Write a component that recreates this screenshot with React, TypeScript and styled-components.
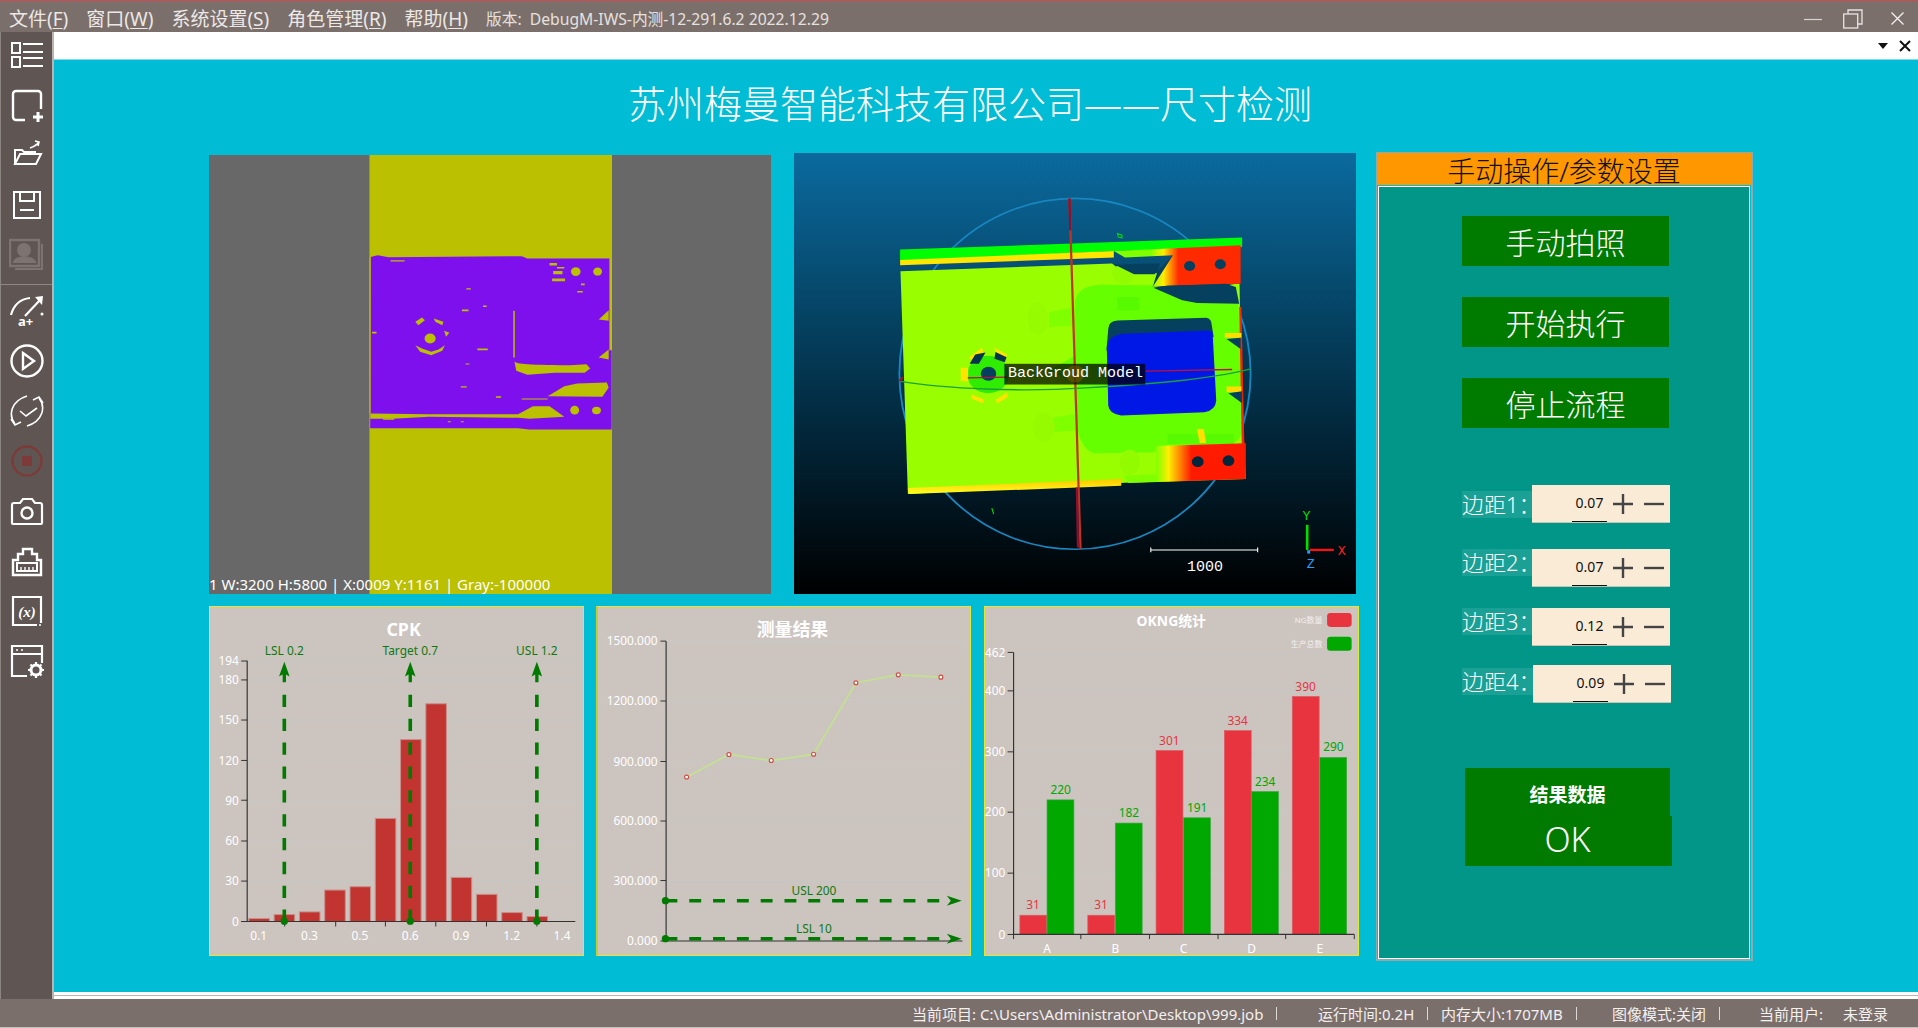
import React from "react";
import styled, { createGlobalStyle } from "styled-components";

const FONT = `"Noto Sans", "Noto Sans CJK SC", sans-serif`;

const Global = createGlobalStyle`
  html, body { margin: 0; padding: 0; overflow: hidden; background: #fff; }
  * { box-sizing: border-box; }
`;

const Page = styled.div`
  width: 1918px; height: 1028px; display: flex; flex-direction: column;
  font-family: ${FONT}; background: #fff; overflow: hidden;
`;

/* ---------- title bar ---------- */
const TitleBar = styled.header`
  height: 32px; flex: none; display: flex; align-items: center; padding: 3px 0 0 9px;
  background: #7b6f6c; border-top: 2px solid #a35f60; color: #ece8e6;
`;
const Menu = styled.nav`display: flex; gap: 18px; align-items: center;`;
const MenuItem = styled.span`font-size: 19px; line-height: 24px; white-space: nowrap; u { text-underline-offset: 2px; }`;
const Version = styled.span`font-size: 15.7px; margin-left: 18px; white-space: nowrap; color: #e6e1df;`;
const WindowButtons = styled.div`
  margin-left: auto; display: flex; align-items: center; gap: 21px; padding-right: 14px;
  svg:last-child { margin-left: 7px; }
`;

const Body = styled.div`flex: 1; min-height: 0; display: flex;`;

/* ---------- sidebar ---------- */
const Sidebar = styled.aside`
  width: 54px; flex: none; background: #5f5552; border-right: 2px solid #b9b4b2;
  border-left: 1px solid #8c8582; display: flex; flex-direction: column; align-items: center;
  padding-top: 5px; gap: 14px;
`;
const ToolIcon = styled.svg.attrs({ viewBox: "0 0 36 36", fill: "none" })<{ $tint?: string }>`
  width: 36px; height: 36px; flex: none; stroke: ${p => p.$tint ?? "#fff"}; stroke-width: 2;
`;
const ToolDivider = styled.div`
  align-self: stretch; height: 1px; background: #8f8784; margin: -3px 0 -6px;
`;

/* ---------- workspace ---------- */
const Workspace = styled.main`flex: 1; min-width: 0; display: flex; flex-direction: column;`;
const TabStrip = styled.div`
  height: 27px; flex: none; display: flex; justify-content: flex-end; align-items: center;
  gap: 11px; padding: 0 7px 0 0; background: #fff;
`;
const Canvas = styled.div`
  flex: 1; min-height: 0; background: #00bcd4; border-top: 1px solid #7fdcea;
  padding-left: 155px; display: flex; flex-direction: column;
`;
const PageFoot = styled.div`
  height: 7px; flex: none; background: #fff; display: flex; align-items: center;
  &::after { content: ""; flex: 1; height: 1px; background: #b5b5b5; }
`;
const Heading = styled.h1`
  margin: 0 0 0 -155px; height: 92px; flex: none; display: flex; justify-content: center; align-items: center;
  padding: 0 32px 6px 0; font-size: 38px; font-weight: 300; color: #fff; line-height: 1; white-space: nowrap;
`;
const Columns = styled.div`display: flex; align-items: flex-start; gap: 17px;`;
const LeftArea = styled.div`width: 1150px; flex: none; padding-top: 1px; display: flex; flex-direction: column; gap: 12px;`;
const ViewRow = styled.div`display: flex; gap: 23px; height: 441px; align-items: flex-start;`;
const ChartRow = styled.div`display: flex; gap: 12px;`;

const ImagePane = styled.div<{ $top?: number }>`
  position: relative; width: 562px; height: ${p => 441 - (p.$top ?? 0)}px; margin-top: ${p => p.$top ?? 0}px;
  flex: none; overflow: hidden; svg { display: block; width: 100%; height: 100%; }
`;
const ImageInfo = styled.span`
  position: absolute; left: 0; bottom: -1px; font-size: 15px; line-height: 22px; color: #fff; white-space: nowrap;
`;
const ModelTag = styled.span`
  position: absolute; left: 214px; top: 211px; font-family: "Liberation Mono", monospace; font-size: 15px;
  line-height: 20px; color: #fff; white-space: pre;
`;
const ScaleTag = styled.span`
  position: absolute; left: 393px; top: 405px; font-family: "Liberation Mono", monospace; font-size: 15px;
  line-height: 20px; color: #fff;
`;

const ChartPanel = styled.section<{ $thick?: boolean; $shift?: number }>`
  width: 375px; height: 350px; flex: none; background: #ccc4bf; border: 1px solid #e6e632;
  ${p => p.$thick ? "border-left: 2px solid #c4cc30;" : ""}
  margin-left: ${p => p.$shift ?? 0}px; overflow: hidden;
  svg { display: block; width: 100%; height: 100%; }
`;
const AxisText = styled.text`fill: #fff; font-size: 36px; font-family: ${FONT};`;
const ChartTitle = styled.text<{ $size?: number }>`
  fill: #fff; font-size: ${p => p.$size ?? 54}px; font-weight: 700; text-anchor: middle; font-family: ${FONT};
`;
const MarkText = styled.text`fill: #0c7a10; font-size: 36px; text-anchor: middle; font-family: ${FONT};`;
const ValueText = styled.text<{ $c: string }>`fill: ${p => p.$c}; font-size: 36px; text-anchor: middle; font-family: ${FONT};`;
const LegendText = styled.text`fill: #f4f1ef; font-size: 24px; text-anchor: end; font-family: ${FONT};`;
const Scene3dLetter = styled.text<{ $c: string }>`fill: ${p => p.$c}; font-size: 36px; font-family: "Liberation Mono", monospace;`;

/* ---------- right panel ---------- */
const ControlPanel = styled.section`
  width: 377px; height: 809px; flex: none; display: flex; flex-direction: column;
  background: #00bcd4; border: 1px solid #8fa9ad; border-width: 1px 2px 2px 1px;
`;
const PanelHead = styled.div`
  height: 32px; flex: none; background: #ff9800; color: #111; font-size: 28px; font-weight: 300; line-height: 36px;
  text-align: center; white-space: nowrap;
`;
const PanelBody = styled.div`
  flex: 1; margin: 1px 1px 0 1px; background: #019688; border: 1px solid #fff;
  padding: 29px 0 0 83px; display: flex; flex-direction: column; align-items: flex-start;
`;
const ActionButton = styled.div`
  width: 207px; height: 50px; flex: none; background: #007b00; color: #fff; font-size: 30px; font-weight: 300;
  display: flex; align-items: center; justify-content: center; margin-bottom: 31px; white-space: nowrap;
  &:nth-of-type(3) { margin-bottom: 0; }
`;
const ParamRow = styled.div<{ $top: number }>`
  display: flex; align-items: flex-start; margin-top: ${p => p.$top}px; flex: none;
`;
const ParamLabel = styled.span<{ $shift?: number; $drop: number }>`
  width: ${p => 70 + (p.$shift ?? 0)}px; height: 27px; flex: none; margin-top: ${p => p.$drop}px; background: rgba(255,255,255,.1);
  color: #fff; font-size: 22px; font-weight: 300; line-height: 27px; white-space: nowrap;
`;
const ParamBox = styled.div`
  width: 138px; height: 38px; flex: none; background: #faebd7; display: flex; align-items: center;
  padding-left: 40px; border-bottom: 1px solid #c8c2b4;
`;
const ParamValue = styled.span`
  width: 35px; height: 37px; flex: none; border-bottom: 1px solid #111; font-size: 14px; color: #111;
  display: flex; align-items: center; justify-content: center; padding-bottom: 1px;
`;
const StepIcon = styled.svg.attrs({ viewBox: "0 0 20 20" })`
  width: 20px; height: 20px; flex: none; margin-left: 6px; stroke: #444; stroke-width: 2.4; fill: none;
  & + & { margin-left: 11px; }
`;
const ResultWrap = styled.div`margin: 65px 0 0 3px; display: flex; flex-direction: column; align-items: flex-start;`;
const ResultHead = styled.div`
  width: 205px; height: 48px; background: #007b00; color: #fff; font-size: 19px; font-weight: 700;
  display: flex; align-items: center; justify-content: center; padding-top: 4px;
`;
const ResultValue = styled.div`
  width: 207px; height: 50px; background: #007b00; color: #fff; font-size: 34px; font-weight: 300;
  display: flex; align-items: center; justify-content: center; padding: 0 2px 5px 0;
`;

/* ---------- status bar ---------- */
const StatusBar = styled.footer`
  height: 29px; flex: none; background: #7b6f6c; border-bottom: 1px solid #c4c0be; color: #f4f1ef;
  display: flex; align-items: center; padding-left: 912px; font-size: 15px;
`;
const StatusCell = styled.span<{ $w: number }>`
  width: ${p => p.$w}px; flex: none; white-space: nowrap; display: flex; align-items: center;
`;
const StatusBarSep = styled.i`
  width: 1px; height: 13px; background: #dcd8d6; margin-left: 13px; flex: none;
`;

/* ---------- drawings ---------- */
const Tool = {
  List: () => (
    <ToolIcon>
      <rect x="3" y="6" width="8" height="10" /><rect x="3" y="20" width="8" height="10" />
      <path d="M14 7h20M14 15h20M14 21h20M14 29h20" />
    </ToolIcon>
  ),
  New: () => (
    <ToolIcon>
      <path d="M16 33H7a3 3 0 0 1-3-3V7a3 3 0 0 1 3-3h22a3 3 0 0 1 3 3v15" strokeWidth="2.4" />
      <path d="M29 25v10M24 30h10" strokeWidth="3" />
    </ToolIcon>
  ),
  Open: () => (
    <ToolIcon>
      <path d="M6 27 V13h7l2 2h11v3" /><path d="M6 27h21l5-10H11z" />
      <path d="M21 11c3-1 6-2 9-6M26 4l4 1-1 4" strokeWidth="1.6" />
    </ToolIcon>
  ),
  Save: () => (
    <ToolIcon>
      <rect x="5" y="5" width="26" height="26" /><path d="M11 5v9h14V5M11 23h14" />
    </ToolIcon>
  ),
  Person: () => (
    <ToolIcon $tint="#7d7370">
      <rect x="1" y="3" width="29" height="26" strokeWidth="2.4" />
      <path d="M33 7v25H6" />
      <circle cx="15" cy="13" r="6" fill="#7d7370" />
      <path d="M5 25c2-6 18-6 21 0z" fill="#7d7370" />
    </ToolIcon>
  ),
  Arc: () => (
    <ToolIcon>
      <path d="M2 22C5 11 12 6 21 5" strokeWidth="2.2" />
      <path d="M16 23 31 7" strokeWidth="2.2" /><path d="M26 4l8-1-1 9z" fill="#fff" stroke="none" />
      <circle cx="33" cy="21" r="1.5" fill="#fff" stroke="none" />
      <text x="9" y="33" fontSize="13" fontWeight="700" fill="#fff" stroke="none" fontFamily={FONT}>a+</text>
    </ToolIcon>
  ),
  Play: () => (
    <ToolIcon>
      <circle cx="18" cy="18" r="15.5" strokeWidth="2.4" /><path d="M14 10l11 8-11 8z" strokeWidth="2.4" />
    </ToolIcon>
  ),
  Cycle: () => (
    <ToolIcon>
      <path d="M6 31C-1 22 2 8 18 3" strokeWidth="1.6" /><path d="M2 26l4 6 6-3" strokeWidth="1.6" />
      <path d="M30 5c7 9 4 23-12 28" strokeWidth="1.6" /><path d="M34 10l-4-6-6 3" strokeWidth="1.6" />
      <path d="M11 18l6 5 11-8" strokeWidth="1.6" />
    </ToolIcon>
  ),
  Stop: () => (
    <ToolIcon $tint="#7c3b38">
      <circle cx="18" cy="18" r="14.5" strokeWidth="2.4" /><rect x="13" y="13" width="10" height="10" fill="#7c3b38" stroke="none" />
    </ToolIcon>
  ),
  Camera: () => (
    <ToolIcon>
      <path d="M3 12a2 2 0 0 1 2-2h6l3-4h9l3 4h5a2 2 0 0 1 2 2v18a1 1 0 0 1-1 1H4a1 1 0 0 1-1-1z" strokeWidth="2.2" />
      <circle cx="18" cy="20" r="5.5" strokeWidth="2.4" />
    </ToolIcon>
  ),
  Socket: () => (
    <ToolIcon>
      <path d="M4 32V17h5V11h5V6h9v5h5v6h4v15z" strokeWidth="2.4" />
      <rect x="8" y="20" width="20" height="8" /><path d="M12 24v4M16 24v4M20 24v4M24 24v4" strokeWidth="1.4" />
    </ToolIcon>
  ),
  Formula: () => (
    <ToolIcon>
      <path d="M28 32H4V4h28v26" strokeWidth="2.2" />
      <text x="18" y="24" textAnchor="middle" fontSize="15" fontWeight="700" fontStyle="italic" fill="#fff" stroke="none" fontFamily="Liberation Serif, serif">(x)</text>
      <circle cx="31" cy="32" r="1" fill="#fff" stroke="none" />
    </ToolIcon>
  ),
  Gear: () => (
    <ToolIcon>
      <path d="M18 33H3V3h30v17M3 11h30" strokeWidth="2.2" />
      <circle cx="8" cy="7" r="1" fill="#fff" stroke="none" /><circle cx="13" cy="7" r="1" fill="#fff" stroke="none" />
      <circle cx="27" cy="27" r="5" strokeWidth="3" />
      <path d="M27 19v3M27 32v3M19 27h3M32 27h3M21.5 21.5l2 2M30.5 30.5l2 2M21.5 32.5l2-2M30.5 23.5l2-2" strokeWidth="2.2" />
    </ToolIcon>
  ),
};

const Flat2D = () => (
  <svg viewBox="24 14 1520 1318" preserveAspectRatio="none">
    <rect x="24" y="14" width="1520" height="1318" fill="#686868" />
    <rect x="458" y="14" width="656" height="1318" fill="#bbc000" />
    <path d="M461 320L480 315 510 321 870 318 885 325H1107V600L1113 600V838H890L860 834H460Z" fill="#7f10ee" />
    <g fill="#bbc000">
      <path d="M460 790L620 792 860 792 900 768H945L985 800 890 806 860 803 620 800 520 806 460 806Z" />
      <path d="M850 634C856 640 870 645 1000 645L1045 642 1055 655 1040 668 960 668 885 674 855 662Z" />
      <path d="M940 738L985 708 1020 700 1100 697 1105 712 1088 740Z" />
      <path d="M1078 508L1105 480V512ZM1078 622L1105 598V628Z" />
      <rect x="847" y="482" width="4" height="140" />
      <rect x="458" y="320" width="3" height="470" />
      <ellipse cx="1016" cy="364" rx="13" ry="13" /><ellipse cx="1075" cy="364" rx="12" ry="12" />
      <ellipse cx="1013" cy="780" rx="12" ry="13" /><ellipse cx="1072" cy="781" rx="12" ry="11" />
      <circle cx="622" cy="565" r="15" />
      <path d="M582 515L600 502 608 510 590 525ZM632 505L658 515 655 525 636 515ZM660 542L674 548 665 560ZM582 585L600 595 625 605 645 598 662 585 655 602 625 615 595 605Z" />
      <path d="M515 330h38v4h-38zM708 478h18v5h-18zM750 595h28v5h-28zM720 414h12v4h-12zM765 466h10v4h-10zM718 640h10v3h-10zM465 545h12v5h-12zM705 708h16v4h-16zM800 738h14v5h-14zM870 745h70v3h-70z" />
      <path d="M945 338h20v8h-20zM965 350h20v5h-20zM955 362h25v10h-25zM952 385h35v8h-35zM1030 400h10v5h-10zM1020 422h15v5h-15z" />
      <path d="M495 805h30v4h-30zM670 813h8v3h-8zM705 813h8v3h-8z" />
    </g>
  </svg>
);

const BG = "#05405f";
const Cloud3D = () => (
  <svg viewBox="10 9 1520 1320" preserveAspectRatio="none">
    <defs>
      <linearGradient id="sky" x1="0" y1="0" x2="0" y2="1">
        <stop offset="0" stopColor="#0b6a9e" /><stop offset=".3" stopColor="#064a6e" />
        <stop offset=".62" stopColor="#02283c" /><stop offset="1" stopColor="#000" />
      </linearGradient>
      <linearGradient id="heatTop" gradientUnits="userSpaceOnUse" x1="975" y1="0" x2="1050" y2="0">
        <stop offset="0" stopColor="#80ff00" /><stop offset=".45" stopColor="#ffee00" /><stop offset="1" stopColor="#ff2a00" />
      </linearGradient>
      <linearGradient id="heatLow" gradientUnits="userSpaceOnUse" x1="990" y1="0" x2="1085" y2="0">
        <stop offset="0" stopColor="#80ff00" /><stop offset=".35" stopColor="#ffee00" /><stop offset="1" stopColor="#ff1a00" />
      </linearGradient>
      <linearGradient id="rim" gradientUnits="userSpaceOnUse" x1="0" y1="985" x2="0" y2="1030">
        <stop offset="0" stopColor="#ffc800" /><stop offset="1" stopColor="#ffff20" />
      </linearGradient>
    </defs>
    <rect x="10" y="9" width="1520" height="1320" fill="url(#sky)" />
    <ellipse cx="770" cy="670" rx="475" ry="525" fill="none" stroke="#1a86c0" strokeWidth="5" />
    <path d="M297 298L1222 262V290L875 302 297 334Z" fill="#00ff00" />
    <path d="M297 329L875 302V322L297 345Z" fill="#ffe600" />
    <path d="M298 363L870 340 900 365 985 368 1215 400 1218 600 1226 840 1232 985 905 996 318 1030Z" fill="#99ff00" />
    <path d="M770 450Q780 405 840 403L985 405 1060 450 1212 458 1224 830Q1222 872 1190 880L990 886 985 905 820 908Q778 890 772 800L770 700 700 660 770 615Z" fill="#66ff00" />
    <path d="M700 485L770 470V525L700 530ZM710 800L770 790V840L710 845Z" fill="#80ff00" />
    <path d="M884 440h60v40h-60zM1020 850h180v30h-180z" fill="#58fa00" />
    <ellipse cx="670" cy="505" rx="28" ry="48" fill="#96fb00" /><ellipse cx="685" cy="830" rx="30" ry="45" fill="#96fb00" />
    <ellipse cx="918" cy="935" rx="28" ry="38" fill="#92fb00" /><ellipse cx="900" cy="372" rx="30" ry="30" fill="#92fb00" />
    <path d="M875 342L930 372H985L1036 315 1218 300V398L1100 420 980 410 1000 340Z" fill={BG} />
    <path d="M875 302L1218 285V400L1020 406 980 410 1035 315 905 322Z" fill="url(#heatTop)" />
    <path d="M1178 400L1205 410 1214 460 1100 458 1060 450 982 412 1020 406Z" fill={BG} />
    <path d="M1214 470h6l8 410h-7z" fill="#ff2400" />
    <path d="M990 886L1232 878V985L915 997 900 975 990 970Z" fill="url(#heatLow)" />
    <path d="M318 1012L895 985V1005L320 1030Z" fill="url(#rim)" />
    <circle cx="1080" cy="347" r="15" fill={BG} /><circle cx="1163" cy="342" r="15" fill={BG} />
    <circle cx="1102" cy="933" r="16" fill="#04263a" /><circle cx="1185" cy="930" r="16" fill="#04263a" />
    <path d="M860 535Q860 512 885 510L1125 502Q1140 505 1140 525L1145 560 855 600Z" fill={BG} />
    <path d="M856 590Q860 555 900 550L1130 540 1142 545 1152 750Q1150 780 1120 785L895 795Q862 790 860 765Z" fill="#0018e6" />
    <path d="M1175 548h45v14h-45zM1180 708h40v16h-40z" fill="#ffdd00" />
    <path d="M1180 566L1218 562V596ZM1185 728L1222 722V758Z" fill={BG} />
    <path d="M1100 835h18l7 42h-18z" fill="#ffe000" />
    <circle cx="535" cy="672" r="56" fill="#30ec00" />
    <circle cx="536" cy="670" r="21" fill={BG} />
    <path d="M484 620L518 592 522 604 497 642ZM552 592L586 612 582 632 555 606Z" fill="#ffe400" />
    <path d="M485 640L500 612 528 606 510 640ZM555 605L585 620 580 635 552 625Z" fill="#04344e" />
    <path d="M461 652h20v40h-20zM490 732l32 14v12l-32-14zM555 748l32-22v14l-26 18z" fill="#ffe400" />
    <path d="M755 145L785 1195" stroke="#c03322" strokeWidth="6" fill="none" />
    <path d="M755 145L757 240M775 1010L778 1190" stroke="#8d1030" strokeWidth="6" fill="none" />
    <path d="M295 692C420 715 620 725 800 712 950 702 1120 690 1245 655" stroke="#1aa040" strokeWidth="4" fill="none" />
    <path d="M480 682L585 680M960 662L1195 657" stroke="#b81040" strokeWidth="4" fill="none" />
    <path d="M295 692L305 680" stroke="#a01030" strokeWidth="6" />
    <rect x="579" y="640" width="381" height="62" fill="#000" fillOpacity=".72" />
    <circle cx="770" cy="670" r="26" fill="#7a5a00" fillOpacity=".55" />
    <path d="M975 1190v14M975 1197H1264M1264 1190v14" stroke="#fff" strokeWidth="3" fill="none" />
    <path d="M1398 1122V1197" stroke="#00e000" strokeWidth="7" />
    <path d="M1405 1197H1470" stroke="#ff1010" strokeWidth="7" />
    <rect x="1398" y="1198" width="8" height="10" fill="#20a0ff" />
    <Scene3dLetter $c="#00e000" x="1385" y="1108">Y</Scene3dLetter>
    <Scene3dLetter $c="#ff2020" x="1481" y="1212">X</Scene3dLetter>
    <Scene3dLetter $c="#20a0ff" x="1397" y="1252">Z</Scene3dLetter>
    <path d="M885 250l12 5v8l-10-2zM545 1072l5 18" stroke="#00e000" strokeWidth="3" fill="none" />
  </svg>
);

const dashProps = { stroke: "#007b00", strokeWidth: 11, fill: "none" };

const CpkChart = () => {
  const gx = [181, 238, 359, 481, 601, 724, 845];
  const yl: [string, number][] = [["194", 181], ["180", 238], ["150", 359], ["120", 481], ["90", 601], ["60", 724], ["30", 845], ["0", 967]];
  const tops = [958, 946, 938, 872, 862, 656, 418, 310, 834, 885, 940, 952];
  const xl: [string, number][] = [["0.1", 175], ["0.3", 328], ["0.5", 480], ["0.6", 632], ["0.9", 785], ["1.2", 938], ["1.4", 1090]];
  const marks: [string, number][] = [["LSL 0.2", 252], ["Target 0.7", 632], ["USL 1.2", 1014]];
  return (
    <svg viewBox="28 18 1125 1050">
      {gx.map(y => <line key={y} x1="140" x2="1128" y1={y} y2={y} stroke="#c6c8c6" strokeWidth="3" />)}
      {tops.map((t, i) => {
        const x = 145 + i * 76.3;
        return <rect key={i} x={x} y={t} width="62" height={967 - t} fill="#c1342f" stroke="#c98f8a" strokeWidth="3" />;
      })}
      <path d="M140 180V967M122 967H1130" stroke="#333" strokeWidth="3.5" fill="none" />
      {yl.map(([, y]) => <line key={y} x1="122" x2="140" y1={y} y2={y} stroke="#333" strokeWidth="3" />)}
      {[253, 407, 557, 709, 862, 1014].map(x => <line key={x} x1={x} x2={x} y1="967" y2="982" stroke="#333" strokeWidth="3" />)}
      {yl.map(([t, y]) => <AxisText key={t} x="115" y={y + 13} textAnchor="end">{t}</AxisText>)}
      {xl.map(([t, x]) => <AxisText key={t} x={x} y="1023" textAnchor="middle">{t}</AxisText>)}
      {marks.map(([t, x]) => (
        <g key={t}>
          <MarkText x={x} y="162">{t}</MarkText>
          <path d={`M${x} 283V967`} {...dashProps} strokeDasharray="37 35" />
          <path d={`M${x} 183l16 45-11-6v23h-10v-23l-11 6z`} fill="#007b00" />
          <circle cx={x} cy="966" r="11" fill="#007b00" />
        </g>
      ))}
      <ChartTitle x="612" y="106">CPK</ChartTitle>
    </svg>
  );
};

const ResultChart = () => {
  const ticks: [string, number][] = [["1500.000", 120], ["1200.000", 301], ["900.000", 484], ["600.000", 664], ["300.000", 844], ["0.000", 1027]];
  const pts = [[286, 531], [414, 463], [542, 481], [670, 462], [798, 246], [926, 222], [1055, 229]];
  const limits: [string, number, number][] = [["USL 200", 905, 887], ["LSL 10", 1020, 1002]];
  return (
    <svg viewBox="18 18 1125 1050">
      {ticks.slice(0, 5).map(([t, y]) => <line key={t} x1="224" x2="1120" y1={y} y2={y} stroke="#c6c8c6" strokeWidth="3" />)}
      <path d="M224 120V1027H1120" stroke="#333" strokeWidth="3.5" fill="none" />
      {ticks.map(([t, y]) => <line key={t} x1="207" x2="224" y1={y} y2={y} stroke="#333" strokeWidth="3" />)}
      {ticks.map(([t, y]) => <AxisText key={t} x="198" y={y + 13} textAnchor="end">{t}</AxisText>)}
      <polyline points={pts.join(" ")} fill="none" stroke="#c4de96" strokeWidth="6" />
      {pts.map(([x, y]) => <circle key={x} cx={x} cy={y} r="6" fill="#fff" stroke="#d04a40" strokeWidth="3.5" />)}
      {limits.map(([t, y, ty]) => (
        <g key={t}>
          <MarkText x="671" y={ty}>{t}</MarkText>
          <path d={`M222 ${y}H1075`} {...dashProps} strokeDasharray="36 36" />
          <circle cx="222" cy={y} r="11" fill="#007b00" />
          <path d={`M1118 ${y}l-45-15 12 15-12 15z`} fill="#007b00" />
        </g>
      ))}
      <ChartTitle x="606" y="106">测量结果</ChartTitle>
    </svg>
  );
};

const OkngChart = () => {
  const grid: [string, number][] = [["462", 155], ["400", 271], ["300", 455], ["200", 637], ["100", 821], ["0", 1006]];
  const reds = [[117, 948, "31"], [322, 948, "31"], [528, 451, "301"], [734, 391, "334"], [939, 288, "390"]] as const;
  const greens = [[199, 600, "220"], [405, 670, "182"], [611, 654, "191"], [816, 575, "234"], [1022, 472, "290"]] as const;
  const cats: [string, number][] = [["A", 199], ["B", 405], ["C", 611], ["D", 816], ["E", 1022]];
  return (
    <svg viewBox="12 18 1125 1050">
      {grid.slice(0, 5).map(([t, y]) => <line key={t} x1="98" x2="1126" y1={y} y2={y} stroke="#c6c8c6" strokeWidth="3" />)}
      {reds.map(([x, t, v]) => (
        <g key={x}>
          <rect x={x} y={t} width="81" height={1006 - t} fill="#e8343f" stroke="#dc5a62" strokeWidth="2" />
          <ValueText $c="#e8343f" x={x + 40} y={t - 18}>{v}</ValueText>
        </g>
      ))}
      {greens.map(([x, t, v]) => (
        <g key={x}>
          <rect x={x} y={t} width="81" height={1006 - t} fill="#00a800" stroke="#3aa844" strokeWidth="2" />
          <ValueText $c="#00a800" x={x + 41} y={t - 18}>{v}</ValueText>
        </g>
      ))}
      <path d="M98 155V1006H1126" stroke="#333" strokeWidth="3.5" fill="none" />
      {grid.map(([t, y]) => <line key={t} x1="80" x2="98" y1={y} y2={y} stroke="#333" strokeWidth="3" />)}
      {[98, 301, 508, 715, 919, 1126].map(x => <line key={x} x1={x} x2={x} y1="1006" y2="1020" stroke="#333" strokeWidth="3" />)}
      {grid.map(([t, y]) => <AxisText key={t} x="73" y={y + 13} textAnchor="end">{t}</AxisText>)}
      {cats.map(([t, x]) => <AxisText key={t} x={x} y="1062" textAnchor="middle">{t}</AxisText>)}
      <ChartTitle $size={42} x="574" y="74">OKNG统计</ChartTitle>
      <LegendText x="1030" y="66">NG数量</LegendText>
      <LegendText x="1030" y="138">生产总数</LegendText>
      <rect x="1044" y="36" width="74" height="42" rx="10" fill="#e8343f" />
      <rect x="1044" y="108" width="74" height="42" rx="10" fill="#00a800" />
    </svg>
  );
};

const menus: [string, string][] = [["文件", "F"], ["窗口", "W"], ["系统设置", "S"], ["角色管理", "R"], ["帮助", "H"]];
const params: { n: number; v: string; top: number; drop: number; shift?: number }[] = [
  { n: 1, v: "0.07", top: 57, drop: 6 }, { n: 2, v: "0.07", top: 26, drop: 0 },
  { n: 3, v: "0.12", top: 21, drop: 0 }, { n: 4, v: "0.09", top: 19, drop: 3, shift: 1 },
];

export default function App() {
  return (
    <Page>
      <Global />
      <TitleBar>
        <Menu>
          {menus.map(([t, k]) => <MenuItem key={k}>{t}(<u>{k}</u>)</MenuItem>)}
        </Menu>
        <Version>版本:&nbsp; DebugM-IWS-内测-12-291.6.2 2022.12.29</Version>
        <WindowButtons>
          <svg width="18" height="20" viewBox="0 0 18 20"><path d="M0 10.5h18" stroke="#d8d3d1" strokeWidth="1.2" /></svg>
          <svg width="20" height="20" viewBox="0 0 20 20" fill="none" stroke="#e8e4e2" strokeWidth="1.3"><rect x=".7" y="5" width="14" height="14" /><path d="M5 5V1h14v14h-4" /></svg>
          <svg width="13" height="13" viewBox="0 0 13 13" stroke="#f4f1ef" strokeWidth="1.3"><path d="M.5.5l12 12M12.5.5l-12 12" /></svg>
        </WindowButtons>
      </TitleBar>
      <Body>
        <Sidebar>
          <Tool.List /><Tool.New /><Tool.Open /><Tool.Save /><Tool.Person />
          <ToolDivider />
          <Tool.Arc /><Tool.Play /><Tool.Cycle /><Tool.Stop /><Tool.Camera /><Tool.Socket /><Tool.Formula /><Tool.Gear />
        </Sidebar>
        <Workspace>
          <TabStrip>
            <svg width="10" height="6" viewBox="0 0 10 6"><path d="M0 0h10L5 6z" fill="#111" /></svg>
            <svg width="12" height="12" viewBox="0 0 12 12" stroke="#111" strokeWidth="2"><path d="M1 1l10 10M11 1L1 11" /></svg>
          </TabStrip>
          <Canvas>
            <Heading>苏州梅曼智能科技有限公司——尺寸检测</Heading>
            <Columns>
              <LeftArea>
                <ViewRow>
                  <ImagePane $top={2}>
                    <Flat2D />
                    <ImageInfo>1 W:3200 H:5800 | X:0009 Y:1161 | Gray:-100000</ImageInfo>
                  </ImagePane>
                  <ImagePane>
                    <Cloud3D />
                    <ModelTag>BackGroud Model</ModelTag>
                    <ScaleTag>1000</ScaleTag>
                  </ImagePane>
                </ViewRow>
                <ChartRow>
                  <ChartPanel><CpkChart /></ChartPanel>
                  <ChartPanel $thick><ResultChart /></ChartPanel>
                  <ChartPanel $shift={1}><OkngChart /></ChartPanel>
                </ChartRow>
              </LeftArea>
              <ControlPanel>
                <PanelHead>手动操作/参数设置</PanelHead>
                <PanelBody>
                  <ActionButton>手动拍照</ActionButton>
                  <ActionButton>开始执行</ActionButton>
                  <ActionButton>停止流程</ActionButton>
                  {params.map(p => (
                    <ParamRow key={p.n} $top={p.top}>
                      <ParamLabel $shift={p.shift} $drop={p.drop}>边距{p.n}：</ParamLabel>
                      <ParamBox>
                        <ParamValue>{p.v}</ParamValue>
                        <StepIcon><path d="M0 10h20M10 0v20" /></StepIcon>
                        <StepIcon><path d="M0 10h20" /></StepIcon>
                      </ParamBox>
                    </ParamRow>
                  ))}
                  <ResultWrap>
                    <ResultHead>结果数据</ResultHead>
                    <ResultValue>OK</ResultValue>
                  </ResultWrap>
                </PanelBody>
              </ControlPanel>
            </Columns>
          </Canvas>
          <PageFoot />
        </Workspace>
      </Body>
      <StatusBar>
        <StatusCell $w={406}>当前项目: C:\Users\Administrator\Desktop\999.job<StatusBarSep /></StatusCell>
        <StatusCell $w={123}>运行时间:0.2H<StatusBarSep /></StatusCell>
        <StatusCell $w={171}>内存大小:1707MB<StatusBarSep /></StatusCell>
        <StatusCell $w={147}>图像模式:关闭<StatusBarSep /></StatusCell>
        <StatusCell $w={84}>当前用户:</StatusCell>
        <StatusCell $w={60}>未登录</StatusCell>
      </StatusBar>
    </Page>
  );
}
